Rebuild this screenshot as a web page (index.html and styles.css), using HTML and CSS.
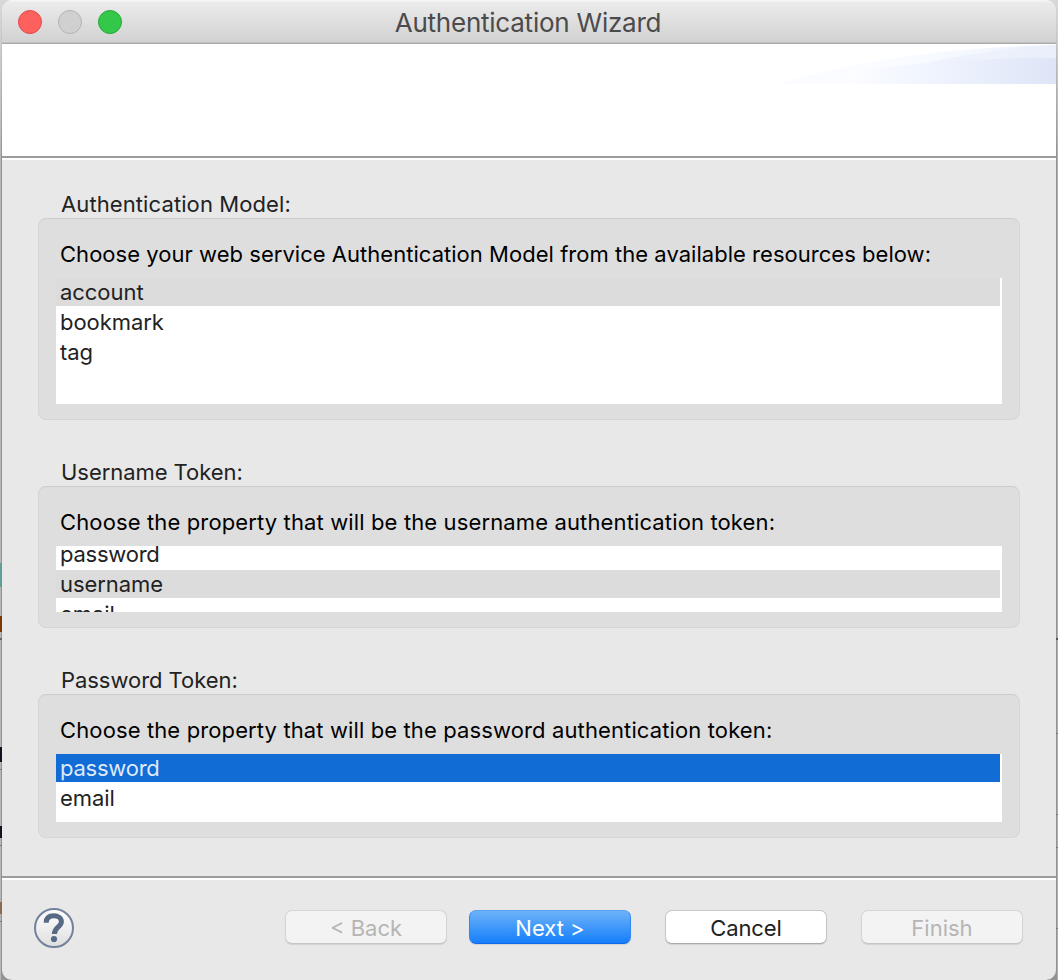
FILE: index.html
```html
<!DOCTYPE html>
<html lang="en">
<head>
<meta charset="utf-8">
<title>Authentication Wizard</title>
<link rel="stylesheet" href="styles.css">
</head>
<body>
<div class="desktop">
<main class="window">
  <header class="titlebar">
    <div class="lights"><i class="light close"></i><i class="light minimize"></i><i class="light expand"></i></div>
    <h1 class="title">Authentication Wizard</h1>
  </header>
  <section class="banner">
    <svg class="swoosh" width="278" height="40" viewBox="0 0 278 40">
      <defs>
        <linearGradient id="g1"><stop offset="0" stop-color="#fafcff"/><stop offset=".4" stop-color="#fafcff"/><stop offset=".75" stop-color="#f3f7fe"/><stop offset="1" stop-color="#e8eefa"/></linearGradient>
        <linearGradient id="g2"><stop offset="0" stop-color="#fcfdff"/><stop offset=".35" stop-color="#f1f5fe"/><stop offset="1" stop-color="#dde5f7"/></linearGradient>
      </defs>
      <path fill="url(#g1)" d="M0 40Q120 4 278 1V40Z"/>
      <path fill="#e9effb" opacity=".7" d="M145 20Q210 5 278 1V15Q200 14 145 20Z"/>
      <path fill="url(#g2)" d="M70 40V28Q170 13 278 14V40Z"/>
    </svg>
  </section>
  <section class="content">
    <h2 class="label model">Authentication Model:</h2>
    <div class="group">
      <p class="prompt prompt-model">Choose your web service Authentication Model from the available resources below:</p>
      <ul class="list list-model">
        <li class="row chosen">account</li>
        <li class="row">bookmark</li>
        <li class="row">tag</li>
      </ul>
    </div>
    <h2 class="label user">Username Token:</h2>
    <div class="group">
      <p class="prompt prompt-user">Choose the property that will be the username authentication token:</p>
      <ul class="list list-user">
        <li class="row tight">password</li>
        <li class="row chosen">username</li>
        <li class="row">email</li>
      </ul>
    </div>
    <h2 class="label pass">Password Token:</h2>
    <div class="group">
      <p class="prompt prompt-pass">Choose the property that will be the password authentication token:</p>
      <ul class="list list-pass">
        <li class="row active tight">password</li>
        <li class="row">email</li>
      </ul>
    </div>
  </section>
  <footer class="footer">
    <svg class="help" width="42" height="42" viewBox="0 0 42 42">
      <defs><linearGradient id="hg" x2="0" y2="1"><stop offset="0" stop-color="#fff"/><stop offset="1" stop-color="#dedede"/></linearGradient></defs>
      <circle cx="21" cy="21" r="19" fill="url(#hg)" stroke="#73819d" stroke-width="2"/>
      <path d="M13.2 15.8C13.2 10.4 16.6 8.8 20.8 8.8C25.4 8.8 28.4 11 28.4 14.7C28.4 20 21.4 20 21.4 27" fill="none" stroke="#566985" stroke-width="5"/>
      <circle cx="21" cy="32" r="3.1" fill="#566985"/>
    </svg>
    <button class="btn" disabled>&lt; Back</button>
    <button class="btn primary">Next &gt;</button>
    <button class="btn cancel">Cancel</button>
    <button class="btn" disabled>Finish</button>
  </footer>
</main>
</div>
</body>
</html>
```
FILE: styles.css
```css
* { box-sizing: border-box; }
body { margin: 0; font-family: Inter, Roboto, sans-serif; font-size: 22px; color: #222; }
h1, h2, p, ul { margin: 0; padding: 0; font-weight: 400; font-size: inherit; }

/* Slivers of the windows behind show at both edges */
.desktop {
  width: 1058px; height: 980px; padding: 0 2px; overflow: hidden;
  background:
    linear-gradient(#5f9f98, #5f9f98) 0 563px / 2px 24px no-repeat,
    linear-gradient(#7b3b00, #7b3b00) 0 616px / 2px 16px no-repeat,
    linear-gradient(#666, #666) 0 638px / 2px 2px no-repeat,
    linear-gradient(#15121f, #15121f) 0 747px / 2px 15px no-repeat,
    linear-gradient(#777, #777) 0 769px / 2px 1px no-repeat,
    linear-gradient(#15121f, #15121f) 0 826px / 2px 12px no-repeat,
    linear-gradient(#777, #777) 0 845px / 2px 1px no-repeat,
    linear-gradient(#8a6a50, #8a6a50) 0 902px / 2px 12px no-repeat,
    linear-gradient(#777, #777) 0 921px / 2px 1px no-repeat,
    linear-gradient(#555, #555) 1056px 638px / 2px 2px no-repeat,
    linear-gradient(#777, #777) 1056px 733px / 2px 1px no-repeat,
    linear-gradient(#777, #777) 1056px 814px / 2px 1px no-repeat,
    linear-gradient(#777, #777) 1056px 847px / 2px 1px no-repeat,
    linear-gradient(#777, #777) 1056px 928px / 2px 1px no-repeat,
    linear-gradient(#d8d8d8, rgba(175,175,175,0) 160px),
    linear-gradient(90deg, #b7b7b7 1px, #929292 1px, #929292 1057px, #aeaeae 1057px);
}
.window { height: 980px; display: flex; flex-direction: column; background: #e8e8e8; border-radius: 10px; overflow: hidden; }

.titlebar {
  height: 44px; flex: none; display: grid; grid-template-columns: 200px 1fr 200px; align-items: center;
  background: linear-gradient(#f5f5f5 1px, #ebebeb 2px, #d2d2d2 42px);
  border-bottom: 1px solid #aaa; box-shadow: inset 0 -1px #c0c0c0;
}
.lights { display: flex; gap: 16px; padding-left: 16px; }
.light { width: 24px; height: 24px; border-radius: 50%; border: 1px solid; }
.close { background: #fc615d; border-color: #e04b48; }
.minimize { background: #d0d0d0; border-color: #b3b3b3; }
.expand { background: #34c84a; border-color: #27a838; }
.title { font-size: 26px; color: #4b4b4b; text-align: center; white-space: nowrap; line-height: 30px; padding: 3px 2px 0 0; letter-spacing: -.23px; }

.banner { height: 116px; flex: none; display: flex; justify-content: flex-end; background: #fff; border-bottom: 2px solid #fff; box-shadow: inset 0 -2px #9c9c9c; }
.swoosh { display: block; }

.content { height: 716px; flex: none; padding: 0 36px; }
.label { padding-left: 23px; line-height: 28px; height: 28px; white-space: nowrap; letter-spacing: -.05px; }
.model { margin-top: 30px; letter-spacing: .1px; }
.user { margin-top: 38px; }
.pass { margin-top: 38px; }
.group { border: 1px solid #d6d6d6; border-top-color: #cdcdcd; border-radius: 8px; background: #dedede; padding: 21px 17px 15px; }
.prompt { color: #000; padding-left: 4px; height: 38px; line-height: 28px; white-space: nowrap; }
.prompt-model { letter-spacing: .03px; }
.prompt-user { letter-spacing: .13px; }
.prompt-pass { letter-spacing: .12px; }
.list { list-style: none; background: #fff; overflow: hidden; display: flex; flex-direction: column; gap: 2px; padding-right: 2px; }
.list-model { height: 126px; }
.list-user { height: 66px; }
/* The username list is scrolled by part of a row */
.list-user .row:first-child { margin-top: -6px; }
.list-pass { height: 68px; }
.row { height: 28px; flex: none; line-height: 28px; padding-left: 4px; letter-spacing: -.05px; }
.tight { letter-spacing: -.23px; }
.chosen { background: #dcdcdc; }
.active { background: #116cd6; color: #dfe9fa; }

.footer { height: 104px; flex: none; border-top: 2px solid #9c9c9c; box-shadow: inset 0 2px #fff; display: flex; align-items: flex-start; padding: 32px 33px 0 31px; }
.help { margin: -3px auto 0 0; }
.btn {
  font: inherit; width: 162px; height: 34px; padding: 2px 0 0; border-radius: 7px; line-height: 28px;
  border: 1px solid #c7c7c7; border-bottom-color: #aaa; background: #fff; color: #222; box-shadow: 0 1px 1px rgba(0,0,0,.1);
}
.btn:disabled { background: #f3f3f3; color: #b5b5b5; border-color: #d4d4d4; border-bottom-color: #c6c6c6; }
.btn + .btn { margin-left: 34px; }
.btn + .primary { margin-left: 22px; }
.primary { color: #fff; background: linear-gradient(#6db3f8, #157efb); border-color: #58a3f3 #3586f3 #1269ea; }
.cancel { letter-spacing: -.1px; }
```
